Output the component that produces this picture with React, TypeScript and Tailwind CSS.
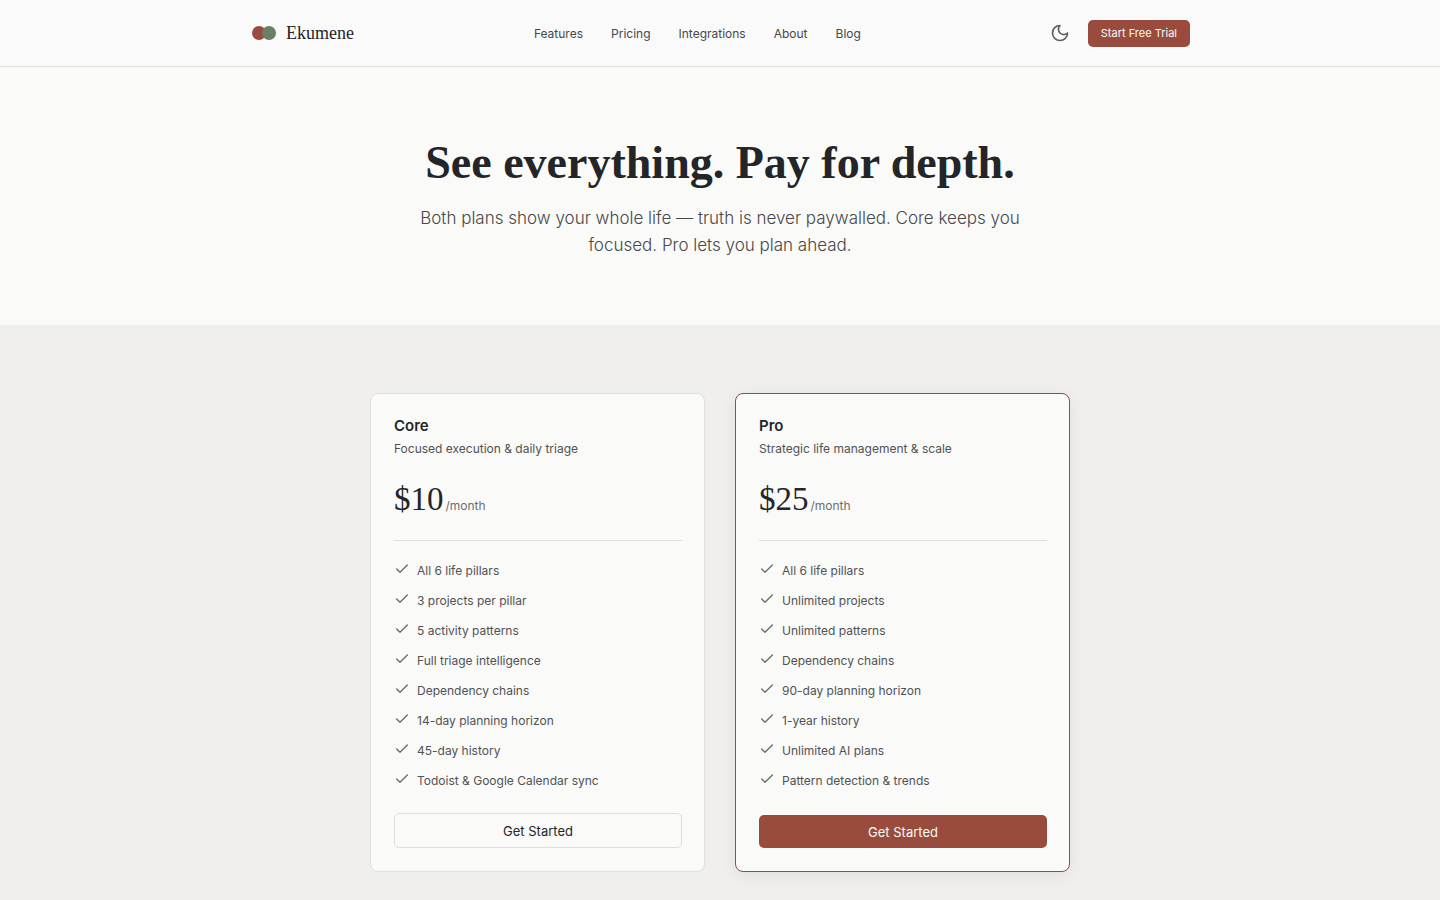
import { Check } from "lucide-react";

const NAV_LINKS = ["Features", "Pricing", "Integrations", "About", "Blog"];

type Plan = {
  name: string;
  tagline: string;
  price: string;
  features: string[];
  featured: boolean;
};

const PLANS: Plan[] = [
  {
    name: "Core",
    tagline: "Focused execution & daily triage",
    price: "$10",
    features: [
      "All 6 life pillars",
      "3 projects per pillar",
      "5 activity patterns",
      "Full triage intelligence",
      "Dependency chains",
      "14-day planning horizon",
      "45-day history",
      "Todoist & Google Calendar sync",
    ],
    featured: false,
  },
  {
    name: "Pro",
    tagline: "Strategic life management & scale",
    price: "$25",
    features: [
      "All 6 life pillars",
      "Unlimited projects",
      "Unlimited patterns",
      "Dependency chains",
      "90-day planning horizon",
      "1-year history",
      "Unlimited AI plans",
      "Pattern detection & trends",
    ],
    featured: true,
  },
];

function Logo() {
  return (
    <svg viewBox="0 0 26 16" className="h-4 w-[26px]" aria-hidden="true">
      <circle cx="8" cy="8" r="7" fill="#994c3d" />
      <circle cx="18" cy="8" r="7" fill="#6b7f66" />
    </svg>
  );
}

function MoonIcon() {
  return (
    <svg
      viewBox="0 0 24 24"
      className="h-5 w-5"
      fill="none"
      stroke="currentColor"
      strokeWidth="2"
      strokeLinecap="round"
      strokeLinejoin="round"
      aria-hidden="true"
    >
      <path d="M12 3a6 6 0 0 0 9 9 9 9 0 1 1-9-9Z" />
    </svg>
  );
}

function Header() {
  return (
    <header className="border-b border-[#dededd] bg-[#fafafa]">
      <div className="mx-auto flex h-[66px] max-w-[940px] items-center justify-between pl-px">
        <a href="#home" className="flex items-center gap-[9px]">
          <Logo />
          <span className="font-['Liberation_Serif',serif] text-[18px] leading-6 text-[#232528]">Ekumene</span>
        </a>
        <nav className="flex items-center gap-7 text-[12px] leading-[21px] text-[#46484b]">
          {NAV_LINKS.map((label) => (
            <a key={label} href={`#${label.toLowerCase()}`}>
              {label}
            </a>
          ))}
        </nav>
        <div className="flex items-center gap-[9px]">
          <button type="button" aria-label="Switch to dark mode" className="p-[9px] text-[#5d5f62]">
            <MoonIcon />
          </button>
          <a
            href="#trial"
            className="rounded-[5px] bg-[#994c3d] px-[13px] py-1 text-[11px] leading-[19px] text-[#fafaf8]"
          >
            Start Free Trial
          </a>
        </div>
      </div>
    </header>
  );
}

function PlanCard({ plan }: { plan: Plan }) {
  return (
    <article
      className={`flex flex-col rounded-lg border bg-[#fafaf8] py-[23px] pr-[22px] pl-[23px] ${
        plan.featured ? "border-[#994c3d] shadow-[0_4px_16px_rgba(60,40,30,0.07)]" : "border-[#e0e0de]"
      }`}
    >
      <h2 className="text-[15px] leading-[18px] font-semibold text-[#232528]">{plan.name}</h2>
      <p className="mt-1 text-[12px] leading-5 text-[#505255]">{plan.tagline}</p>
      <p className="mt-5 flex items-baseline gap-[2px]">
        <span className="font-['Liberation_Serif',serif] text-[33px] leading-10 text-[#232528]">{plan.price}</span>
        <span className="text-[12px] leading-5 text-[#6b6d70]">/month</span>
      </p>
      <ul className="mt-[21px] flex flex-col gap-[10px] border-t border-[#dededd] pt-5">
        {plan.features.map((feature) => (
          <li key={feature} className="flex gap-[7px] text-[12px] leading-5 text-[#505255]">
            <Check className="h-4 w-4 shrink-0 text-[#6a6c6a]" strokeWidth={2} />
            {feature}
          </li>
        ))}
      </ul>
      <div className="mt-auto flex pt-[22px]">
        <button
          type="button"
          className={`w-full rounded-[5px] pt-[7px] pb-[5px] text-[13px] leading-[21px] ${
            plan.featured ? "bg-[#994c3d] text-[#fafaf8]" : "border border-[#dededd] text-[#232528]"
          }`}
        >
          Get Started
        </button>
      </div>
    </article>
  );
}

export default function App() {
  return (
    <div className="min-h-screen bg-[#f0efed] font-['Inter',sans-serif]">
      <Header />
      <main>
        <section className="bg-[#fafaf8] px-6 pt-[68px] pb-[66px] text-center">
          <h1 className="font-['Liberation_Serif',serif] text-[46px] leading-[56px] font-bold text-[#232528]">
            See everything. Pay for depth.
          </h1>
          <p className="mx-auto mt-[14px] max-w-[620px] text-[17px] leading-[27px] font-light text-[#46484b]">
            Both plans show your whole life — truth is never paywalled. Core keeps you focused. Pro lets you plan ahead.
          </p>
        </section>
        <section className="px-6 py-[68px]">
          <div className="mx-auto grid max-w-[700px] gap-[30px] md:grid-cols-2">
            {PLANS.map((plan) => (
              <PlanCard key={plan.name} plan={plan} />
            ))}
          </div>
        </section>
      </main>
    </div>
  );
}
